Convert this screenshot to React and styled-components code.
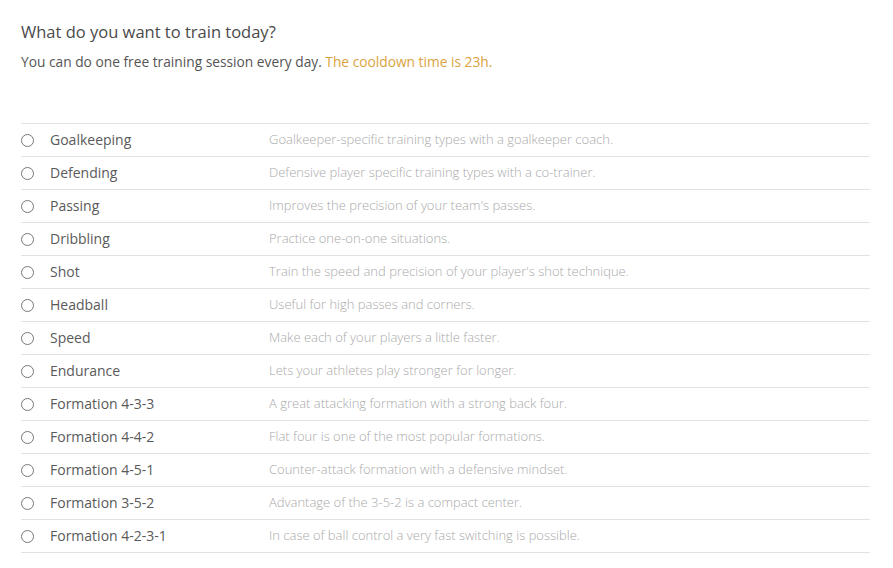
import React, { useState } from 'react'
import styled, { createGlobalStyle } from 'styled-components'

const GlobalStyle = createGlobalStyle`
body{
  margin:0;
  background:#fff;
  font-family:"Open Sans","Liberation Sans",sans-serif;
}
`

const Page = styled.div`
padding:19px 23px 0 21px;
`
const Title = styled.h2`
margin:0;
font-size:16.5px;
font-weight:400;
color:#4a4a4a;
line-height:26px;
`
const Sub = styled.p`
margin:6px 0 0;
font-size:13.75px;
color:#555;
line-height:22px;
`
const Accent = styled.span`
color:#d9a33d;
`
const List = styled.div`
margin-top:50px;
border-top:1px solid #e2e2e2;
`
const Row = styled.label`
display:grid;
grid-template-columns:29px 219px 1fr;
align-items:center;
height:32px;
border-bottom:1px solid #e2e2e2;
cursor:pointer;
`
const Radio = styled.span`
width:11px;
height:11px;
border-radius:50%;
border:1px solid #777;
background:#fff;
display:flex;
align-items:center;
justify-content:center;
&::after{
  content:'';
  width:6px;
  height:6px;
  border-radius:50%;
  background:${p => (p.$on ? '#555' : 'transparent')};
}
`
const Name = styled.span`
font-size:14px;
color:#5a5a5a;
margin-top:-2px;
`
const Desc = styled.span`
font-size:13px;
font-weight:300;
color:#aaa;
margin-top:-2px;
`

const items = [
  ['Goalkeeping', 'Goalkeeper-specific training types with a goalkeeper coach.'],
  ['Defending', 'Defensive player specific training types with a co-trainer.'],
  ['Passing', "Improves the precision of your team's passes."],
  ['Dribbling', 'Practice one-on-one situations.'],
  ['Shot', "Train the speed and precision of your player's shot technique."],
  ['Headball', 'Useful for high passes and corners.'],
  ['Speed', 'Make each of your players a little faster.'],
  ['Endurance', 'Lets your athletes play stronger for longer.'],
  ['Formation 4-3-3', 'A great attacking formation with a strong back four.'],
  ['Formation 4-4-2', 'Flat four is one of the most popular formations.'],
  ['Formation 4-5-1', 'Counter-attack formation with a defensive mindset.'],
  ['Formation 3-5-2', 'Advantage of the 3-5-2 is a compact center.'],
  ['Formation 4-2-3-1', 'In case of ball control a very fast switching is possible.'],
]

export default function App() {
  const [picked, setPicked] = useState(null)
  return (
    <Page>
      <GlobalStyle />
      <Title>What do you want to train today?</Title>
      <Sub>
        You can do one free training session every day. <Accent>The cooldown time is 23h.</Accent>
      </Sub>
      <List>
        {items.map(([name, desc]) => (
          <Row key={name} onClick={() => setPicked(name)}>
            <Radio $on={picked === name} />
            <Name>{name}</Name>
            <Desc>{desc}</Desc>
          </Row>
        ))}
      </List>
    </Page>
  )
}
